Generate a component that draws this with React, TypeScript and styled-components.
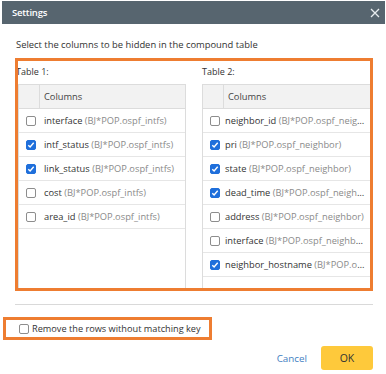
import React from "react";
import styled, { createGlobalStyle } from "styled-components";

const Global = createGlobalStyle`
  html, body { margin: 0; padding: 0; background: #fff; }
  body { font-family: "Open Sans", "Noto Sans", sans-serif; color: #333; }
  * { box-sizing: border-box; }
`;

const Dialog = styled.div`
  width: 386px;
  height: 374px;
  background: #fff;
  display: flex;
  flex-direction: column;
  padding-top: 1px;
  overflow: hidden;
`;

const TitleBar = styled.div`
  height: 23px;
  margin: 0 1px 0 2px;
  background: #57656f;
  color: #fff;
  display: flex;
  align-items: center;
  justify-content: space-between;
  padding: 0 5px 0 10px;
  font-size: 9.5px;
  font-weight: 600;
  letter-spacing: -0.2px;
`;

const CloseIcon = () => (
  <svg width="10" height="10" viewBox="0 0 10 10">
    <path d="M1 1L9 9M9 1L1 9" stroke="#e8ecef" strokeWidth="1.3" />
  </svg>
);

const Subtitle = styled.div`
  margin: 13px 0 0 16px;
  font-size: 9.4px;
  line-height: 15px;
  color: #333;
`;

const Panel = styled.div`
  margin: 6px 0 0 15px;
  width: 358px;
  height: 233px;
  border: 3px solid #ee7d31;
  overflow: hidden;
  display: grid;
  grid-template-columns: 168px 1fr;
  column-gap: 16px;
`;

const Column = styled.div`
  display: flex;
  flex-direction: column;
  min-width: 0;
`;

const Label = styled.div<{ $shift?: number }>`
  height: 23px;
  line-height: 18px;
  padding-top: 2px;
  font-size: 9px;
  color: #333;
  margin-left: ${(p) => p.$shift ?? 0}px;
`;

const Table = styled.div<{ $clipRight?: boolean }>`
  flex: 1;
  border: 1px solid #dcdcdc;
  margin-bottom: -3px;
  margin-right: ${(p) => (p.$clipRight ? "-2px" : "0")};
  display: flex;
  flex-direction: column;
  min-width: 0;
`;

const HeaderRow = styled.div`
  height: 24px;
  display: grid;
  grid-template-columns: 20px 1fr;
  background: #f2f2f2;
  border-bottom: 1px solid #dcdcdc;
`;

const HeaderCell = styled.div`
  display: flex;
  align-items: center;
  padding-left: 4px;
  font-size: 9.3px;
  color: #444;
  border-left: 1px solid #dcdcdc;
`;

const Row = styled.div`
  height: 24px;
  display: grid;
  grid-template-columns: 20px 1fr;
  align-items: center;
  border-bottom: 1px solid #e6e6e6;
`;

const CheckCell = styled.div`
  display: flex;
  justify-content: center;
  align-items: center;
  padding-left: 3px;
`;

const Text = styled.div<{ $indent: number }>`
  padding-left: ${(p) => p.$indent}px;
  padding-right: 4px;
  font-size: 9.3px;
  white-space: nowrap;
  overflow: hidden;
  text-overflow: ellipsis;
  color: #333;
`;

const Source = styled.span`
  color: #8a8a8a;
`;

const Box = styled.span<{ $checked?: boolean }>`
  width: 10px;
  height: 10px;
  border-radius: 2px;
  display: inline-flex;
  align-items: center;
  justify-content: center;
  flex: none;
  border: 1px solid ${(p) => (p.$checked ? "#1f6fdb" : "#8d8d8d")};
  background: ${(p) => (p.$checked ? "#1f6fdb" : "#fff")};
`;

const Check = ({ checked }: { checked?: boolean }) => (
  <Box $checked={checked}>
    {checked && (
      <svg width="8" height="8" viewBox="0 0 8 8">
        <path d="M1.3 4.2L3.1 6L6.7 1.8" stroke="#fff" strokeWidth="1.4" fill="none" />
      </svg>
    )}
  </Box>
);

const Separator = styled.div`
  margin: 13px 13px 0 15px;
  height: 1px;
  background: #d9d9d9;
`;

const OptionBox = styled.label`
  margin: 12px 0 0 3px;
  width: 209px;
  height: 23px;
  border: 3px solid #ee7d31;
  display: flex;
  align-items: center;
  gap: 3px;
  padding-left: 13px;
  font-size: 9.2px;
  white-space: nowrap;
  color: #333;
`;

const Footer = styled.div`
  margin-top: 6px;
  display: flex;
  justify-content: flex-end;
  align-items: center;
  gap: 14px;
  padding-right: 13px;
`;

const CancelButton = styled.button`
  border: none;
  background: none;
  padding: 0;
  font-family: inherit;
  font-size: 9.8px;
  color: #3f7ec2;
`;

const OkButton = styled.button`
  width: 52px;
  height: 24px;
  border: none;
  border-radius: 3px;
  background: #fec93b;
  font-family: inherit;
  font-size: 10.5px;
  color: #333;
`;

type Item = { name: string; checked?: boolean };

const table1: Item[] = [
  { name: "interface" },
  { name: "intf_status", checked: true },
  { name: "link_status", checked: true },
  { name: "cost" },
  { name: "area_id" },
];

const table2: Item[] = [
  { name: "neighbor_id" },
  { name: "pri", checked: true },
  { name: "state", checked: true },
  { name: "dead_time", checked: true },
  { name: "address" },
  { name: "interface" },
  { name: "neighbor_hostname", checked: true },
];

const ColumnTable = ({
  items,
  source,
  clipRight,
  indent,
}: {
  items: Item[];
  source: string;
  clipRight?: boolean;
  indent: number;
}) => (
  <Table $clipRight={clipRight}>
    <HeaderRow>
      <div />
      <HeaderCell>Columns</HeaderCell>
    </HeaderRow>
    {items.map((it) => (
      <Row key={it.name}>
        <CheckCell>
          <Check checked={it.checked} />
        </CheckCell>
        <Text $indent={indent}>
          {it.name} <Source>({source})</Source>
        </Text>
      </Row>
    ))}
  </Table>
);

export default function App() {
  return (
    <>
      <Global />
      <Dialog>
        <TitleBar>
          <span>Settings</span>
          <CloseIcon />
        </TitleBar>
        <Subtitle>Select the columns to be hidden in the compound table</Subtitle>
        <Panel>
          <Column>
            <Label $shift={-2}>Table 1:</Label>
            <ColumnTable items={table1} source="BJ*POP.ospf_intfs" indent={5} />
          </Column>
          <Column>
            <Label>Table 2:</Label>
            <ColumnTable items={table2} source="BJ*POP.ospf_neighbor" clipRight indent={2} />
          </Column>
        </Panel>
        <Separator />
        <OptionBox>
          <Check />
          <span>Remove the rows without matching key</span>
        </OptionBox>
        <Footer>
          <CancelButton>Cancel</CancelButton>
          <OkButton>OK</OkButton>
        </Footer>
      </Dialog>
    </>
  );
}
